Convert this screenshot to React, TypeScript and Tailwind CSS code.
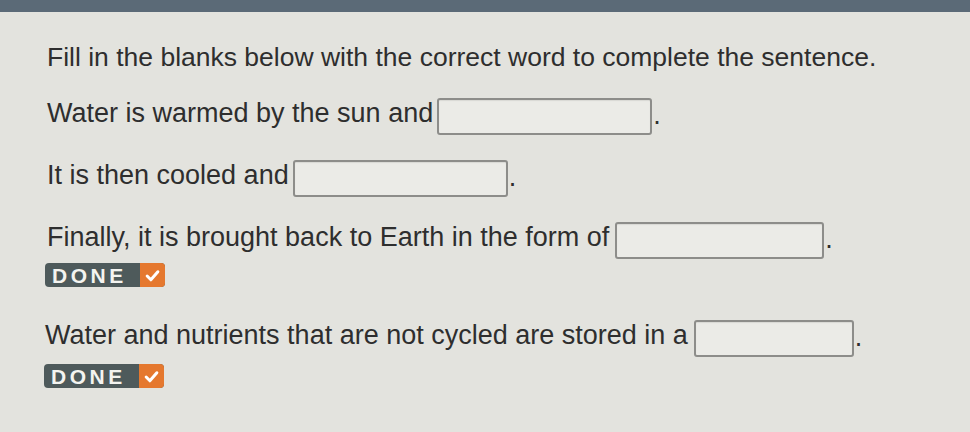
import React from "react";

function Blank({ w }: { w: string }) {
  return (
    <div
      className={`h-[37px] shrink-0 ${w} rounded-[3px] border-2 border-[#8d8d8a] bg-[#ebebe7] shadow-[inset_0_1px_1px_rgba(0,0,0,0.08)]`}
    />
  );
}

function Done() {
  return (
    <div className="flex h-[24px] w-[120px] overflow-hidden rounded-[4px] bg-[#4e5a5b]">
      <div className="flex flex-1 items-center pl-[7px] text-[21px] font-bold leading-none tracking-[3.5px] text-[#f4f4f0]">
        DONE
      </div>
      <div className="flex w-[25px] items-center justify-center bg-[#e5782e]">
        <svg width="15" height="13" viewBox="0 0 14 12">
          <path d="M2 6.5 L5.5 10 L12 2.5" stroke="#fff" strokeWidth="2.8" fill="none" strokeLinecap="round" strokeLinejoin="round" />
        </svg>
      </div>
    </div>
  );
}

function Row({ text, w, gap, cls }: { text: string; w: string; gap: string; cls: string }) {
  return (
    <div className={`flex h-[37px] items-center text-[27px] leading-none ${cls}`}>
      <span className="-mt-[6px]">{text}</span>
      <div className={gap}>
        <Blank w={w} />
      </div>
      <span className="ml-[1px] -mt-[2px]">.</span>
    </div>
  );
}

export default function App() {
  return (
    <div
      className="flex h-[432px] w-[970px] flex-col overflow-hidden bg-[#e3e3de] text-[#2e2e2e]"
      style={{ fontFamily: '"Liberation Sans", Arial, sans-serif' }}
    >
      <div className="h-[12px] w-full bg-[#5b6a77]" />
      <div className="flex flex-col pl-[47px]">
        <div className="mt-[31px] text-[26.5px] leading-[28px]">
          Fill in the blanks below with the correct word to complete the sentence.
        </div>
        <Row text="Water is warmed by the sun and" w="w-[215px]" gap="ml-[4px]" cls="mt-[27px]" />
        <Row text="It is then cooled and" w="w-[215px]" gap="ml-[4px]" cls="mt-[25px]" />
        <Row text="Finally, it is brought back to Earth in the form of" w="w-[209px]" gap="ml-[6px]" cls="mt-[25px]" />
        <div className="mt-[4px] -ml-[2px]">
          <Done />
        </div>
        <Row text="Water and nutrients that are not cycled are stored in a" w="w-[160px]" gap="ml-[6px]" cls="mt-[33px] -ml-[2px]" />
        <div className="mt-[7px] -ml-[3px]">
          <Done />
        </div>
      </div>
    </div>
  );
}
